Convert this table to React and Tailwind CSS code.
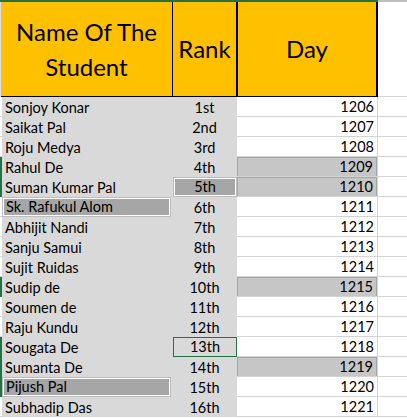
import React from "react";

const rows = [
  { name: "Sonjoy Konar", rank: "1st", day: 1206 },
  { name: "Saikat Pal", rank: "2nd", day: 1207 },
  { name: "Roju Medya", rank: "3rd", day: 1208 },
  { name: "Rahul De", rank: "4th", day: 1209, mark: true, dayHi: true },
  { name: "Suman Kumar Pal", rank: "5th", day: 1210, mark: true, rankHi: true, dayHi: true },
  { name: "Sk. Rafukul Alom", rank: "6th", day: 1211, nameHi: true },
  { name: "Abhijit Nandi", rank: "7th", day: 1212 },
  { name: "Sanju Samui", rank: "8th", day: 1213 },
  { name: "Sujit Ruidas", rank: "9th", day: 1214 },
  { name: "Sudip de", rank: "10th", day: 1215, mark: true, dayHi: true },
  { name: "Soumen de", rank: "11th", day: 1216 },
  { name: "Raju Kundu", rank: "12th", day: 1217 },
  { name: "Sougata De", rank: "13th", day: 1218, mark: true, rankGreen: true },
  { name: "Sumanta De", rank: "14th", day: 1219, mark: true, dayHi: true },
  { name: "Pijush Pal", rank: "15th", day: 1220, mark: true, nameHi: true },
  { name: "Subhadip Das", rank: "16th", day: 1221 },
];

const hiBox =
  "bg-[#a6a6a6] border border-[#bdbdbd] shadow-[inset_0_0_0_1px_#ffffff]";

const Row = ({ name, rank, day, mark, nameHi, rankHi, rankGreen, dayHi }) => (
  <div className="flex h-[20px] text-[14.5px] leading-[17px] text-black">
    <div className={`w-[2px] ${mark ? "bg-[#217346]" : "bg-white border-b border-[#d4d4d4]"}`} />
    <div className="w-[170px] bg-[#d9d9d9] flex">
      <div
        className={`flex-1 flex items-end pb-[1px] pl-[3px] ${nameHi ? hiBox + " mr-[1px]" : ""}`}
      >
        {name}
      </div>
    </div>
    <div className="w-[65px] bg-[#d9d9d9] flex">
      <div
        className={`flex-1 flex items-end pb-[1px] justify-center ${
          rankHi ? hiBox + " ml-[1px]" : rankGreen ? "border border-[#217346] ml-[1px]" : ""
        }`}
      >
        {rank}
      </div>
    </div>
    <div className="w-[140px] bg-white border-b border-[#d4d4d4] flex">
      <div
        className={`flex-1 flex items-end pb-[1px] justify-end pr-[3px] ${
          dayHi ? "bg-[#c6c6c6] border-t border-x border-[#a6a6a6]" : ""
        }`}
      >
        {day}
      </div>
    </div>
    <div className="w-[30px] bg-white border-b border-l border-[#d4d4d4]" />
  </div>
);

export default function App() {
  return (
    <div
      className="w-[407px] h-[418px] bg-white overflow-hidden"
      style={{ fontFamily: "Lato, 'Liberation Sans', sans-serif" }}
    >
      <div className="flex">
        <div className="flex w-[378px] border-t-2 border-[#217346]">
          <div className="w-[1px] bg-[#e0e0e0]" />
          <div className="flex h-[95px] border-b border-black bg-[#ffc000] text-[24px] text-black">
            <div className="w-[172px] border-r border-black flex items-center justify-center text-center leading-[35px]">
              Name Of The
              <br />
              Student
            </div>
            <div className="w-[65px] border-r-2 border-black flex items-center justify-center">
              Rank
            </div>
            <div className="w-[140px] border-r-2 border-black flex items-center justify-center">
              Day
            </div>
          </div>
        </div>
        <div className="flex-1 h-[97px] border-t-2 border-[#bfbfbf] border-b border-b-[#d4d4d4]" />
      </div>
      {rows.map((r) => (
        <Row key={r.rank} {...r} />
      ))}
    </div>
  );
}
